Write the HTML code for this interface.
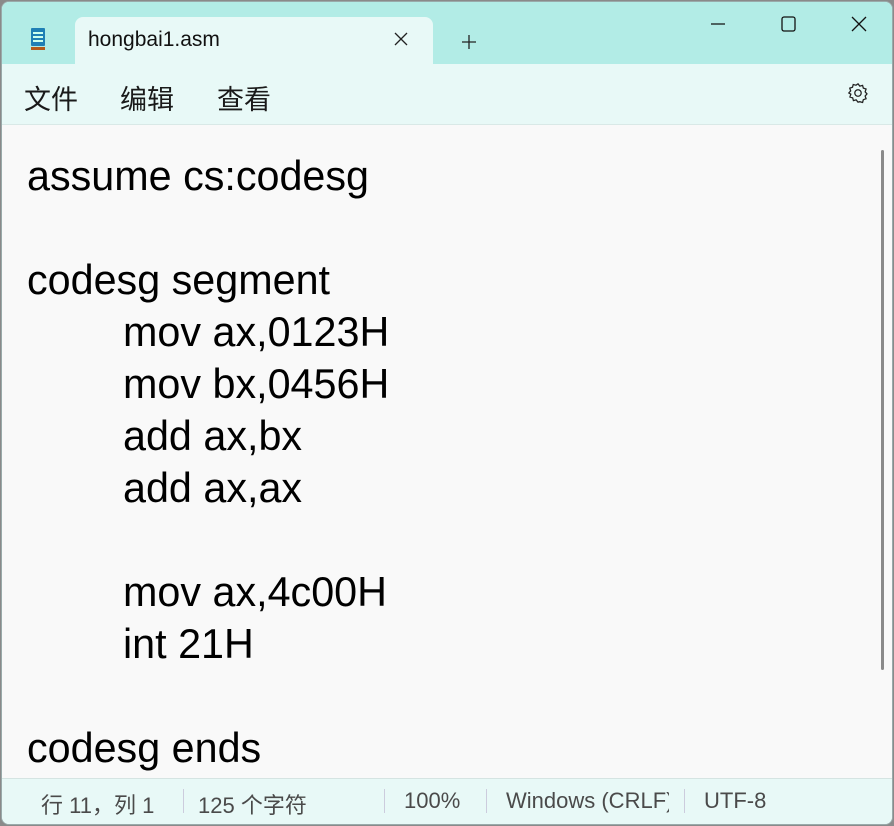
<!DOCTYPE html>
<html><head><meta charset="utf-8"><style>
*{margin:0;padding:0;box-sizing:border-box}
html,body{width:894px;height:826px;overflow:hidden;background:#8a8a8a}
body{font-family:"Liberation Sans","Noto Sans CJK SC",sans-serif}
.win{position:absolute;left:1px;top:1px;width:892px;height:824px;border-radius:8px;overflow:hidden;background:#f9f9f9;border:1px solid #9aa}
.title{position:absolute;left:0;top:0;width:100%;height:62px;background:#b2ece6}
.tab{position:absolute;left:73px;top:15px;width:358px;height:47px;background:#e8f9f7;border-radius:8px 8px 0 0}
.tab span{position:absolute;left:13px;top:11px;font-size:21px;color:#111}
.menu{position:absolute;left:0;top:62px;width:100%;height:61px;background:#e8f9f7;border-bottom:1px solid #d9e9e7}
.menu span{position:absolute;top:14px;font-size:27px;color:#1a1a1a;font-family:"Noto Sans CJK SC",sans-serif}
.ed{position:absolute;left:25px;top:148px;font-size:41.3px;line-height:52px;color:#000;white-space:pre;font-family:"Liberation Sans",sans-serif}
.ed i{font-style:normal;padding-left:96px}
.status{position:absolute;left:0;top:776px;width:100%;height:50px;background:#e8f9f7;border-top:1px solid #d5e4e2}
.status span{position:absolute;top:9px;font-size:22px;color:#4a4a4a;font-family:"Liberation Sans","Noto Sans CJK SC",sans-serif}
.sep{position:absolute;top:10px;width:1px;height:24px;background:#ccd}
.sb{position:absolute;left:879px;top:148px;width:3px;height:520px;background:#8a8a8a;border-radius:2px}
</style></head><body><div class="win">
<div class="title">
<svg style="position:absolute;left:27px;top:24px" width="20" height="26"><rect x="2" y="2" width="14" height="18" fill="#1f7fb5" rx="1"/><rect x="4" y="6" width="10" height="2" fill="#cfe"/><rect x="4" y="10" width="10" height="2" fill="#cfe"/><rect x="4" y="14" width="10" height="2" fill="#cfe"/><rect x="2" y="21" width="14" height="3" fill="#b55a1a"/></svg>
<div class="tab"><span>hongbai1.asm</span>
<svg style="position:absolute;left:319px;top:15px" width="14" height="14"><path d="M1 1L13 13M13 1L1 13" stroke="#222" stroke-width="1.3"/></svg></div>
<svg style="position:absolute;left:459px;top:32px" width="16" height="16"><path d="M8 1V15M1 8H15" stroke="#222" stroke-width="1.3"/></svg>
<svg style="position:absolute;left:709px;top:21px" width="14" height="2"><path d="M0 1H14" stroke="#111" stroke-width="1.3"/></svg>
<svg style="position:absolute;left:779px;top:14px" width="16" height="16"><rect x="1" y="1" width="13" height="14" fill="none" stroke="#111" stroke-width="1.3" rx="2"/></svg>
<svg style="position:absolute;left:849px;top:14px" width="16" height="16"><path d="M1 1L15 15M15 1L1 15" stroke="#111" stroke-width="1.3"/></svg>
</div>
<div class="menu"><span style="left:22px">文件</span><span style="left:118px">编辑</span><span style="left:215px">查看</span>
<svg style="position:absolute;left:845px;top:18px" width="22" height="22" viewBox="0 0 24 24"><path d="M12 2l2 2.5 3-.8.8 3 3 1-1 3 2 2.3-2 2.3 1 3-3 1-.8 3-3-.8L12 22l-2-2.5-3 .8-.8-3-3-1 1-3L2 12l2-2.3-1-3 3-1 .8-3 3 .8z" fill="none" stroke="#222" stroke-width="1.4"/><circle cx="12" cy="12" r="3.5" fill="none" stroke="#222" stroke-width="1.4"/></svg></div>
<div class="ed">assume cs:codesg

codesg segment
<i>mov ax,0123H</i>
<i>mov bx,0456H</i>
<i>add ax,bx</i>
<i>add ax,ax</i>

<i>mov ax,4c00H</i>
<i>int 21H</i>

codesg ends</div>
<div class="sb"></div>
<div class="status"><span style="left:39px">行 11，列 1</span><div class="sep" style="left:181px"></div><span style="left:196px">125 个字符</span><div class="sep" style="left:382px"></div><span style="left:402px">100%</span><div class="sep" style="left:484px"></div><span style="left:504px;width:163px;overflow:hidden;white-space:nowrap">Windows (CRLF)</span><div class="sep" style="left:682px"></div><span style="left:702px">UTF-8</span></div>
</div></body></html>
